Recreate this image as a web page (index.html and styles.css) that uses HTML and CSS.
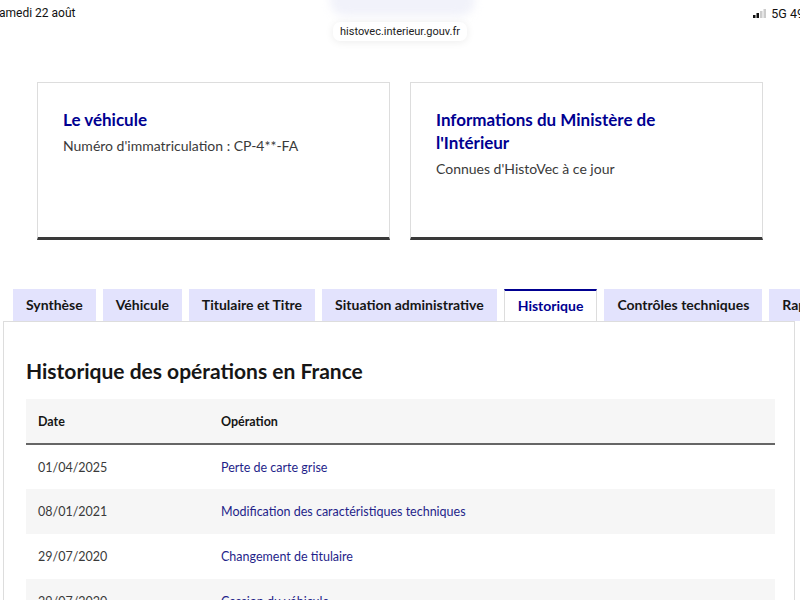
FILE: index.html
```html
<!DOCTYPE html>
<html lang="fr">
<head>
<meta charset="utf-8">
<title>HistoVec</title>
<link rel="stylesheet" href="styles.css">
</head>
<body>
<div class="blur-pill"></div>
<header class="statusbar">
  <span class="date">amedi 22 août</span>
  <span class="net">
    <svg class="signal" width="14" height="9" viewBox="0 0 14 9"><rect x="0" y="6" width="2.5" height="3" fill="#111"/><rect x="3.5" y="4" width="2.5" height="5" fill="#111"/><rect x="7" y="2" width="2.5" height="7" fill="#ccc"/><rect x="10.5" y="0" width="2.5" height="9" fill="#ccc"/></svg>
    <span>5G 49</span>
  </span>
</header>
<div class="urlrow"><span class="url">histovec.interieur.gouv.fr</span></div>

<section class="cards">
  <div class="card">
    <h2 class="card-title">Le véhicule</h2>
    <p class="card-desc">Numéro d'immatriculation : CP-4**-FA</p>
  </div>
  <div class="card">
    <h2 class="card-title">Informations du Ministère de l'Intérieur</h2>
    <p class="card-desc">Connues d'HistoVec à ce jour</p>
  </div>
</section>

<nav class="tabs">
  <span class="tab">Synthèse</span>
  <span class="tab">Véhicule</span>
  <span class="tab">Titulaire et Titre</span>
  <span class="tab">Situation administrative</span>
  <span class="tab active">Historique</span>
  <span class="tab">Contrôles techniques</span>
  <span class="tab">Rapport</span>
</nav>

<section class="panel">
  <h1 class="panel-title">Historique des opérations en France</h1>
  <table class="ops">
    <thead>
      <tr><th class="c1">Date</th><th>Opération</th></tr>
    </thead>
    <tbody>
      <tr><td class="c1">01/04/2025</td><td class="op">Perte de carte grise</td></tr>
      <tr><td class="c1">08/01/2021</td><td class="op">Modification des caractéristiques techniques</td></tr>
      <tr><td class="c1">29/07/2020</td><td class="op">Changement de titulaire</td></tr>
      <tr><td class="c1">29/07/2020</td><td class="op">Cession du véhicule</td></tr>
    </tbody>
  </table>
</section>
</body>
</html>
```
FILE: styles.css
```css
html, body {
  margin: 0;
  padding: 0;
  background: #fff;
  width: 800px;
  height: 600px;
  overflow: hidden;
  font-family: Lato, "Noto Sans", sans-serif;
  color: #161616;
}

.blur-pill {
  position: absolute;
  left: 330px;
  top: -14px;
  width: 145px;
  height: 30px;
  border-radius: 16px;
  background: #f1f2fa;
  filter: blur(4px);
}

.statusbar {
  height: 22px;
  display: flex;
  justify-content: space-between;
  align-items: center;
  font-family: Roboto, "Liberation Sans", sans-serif;
  font-size: 12px;
  color: #111;
  position: relative;
}
.date { margin-left: -1px; margin-top: 4px; }
.net {
  display: flex;
  align-items: center;
  gap: 4px;
  margin-right: -4px;
  margin-top: 4px;
  font-size: 12.5px;
}

.urlrow {
  display: flex;
  justify-content: center;
  height: 20px;
}
.url {
  font-family: Roboto, "Liberation Sans", sans-serif;
  font-size: 11px;
  color: #222;
  background: #fff;
  border-radius: 7px;
  padding: 2px 7px;
  line-height: 15px;
  box-shadow: 0 1px 8px rgba(0,0,0,0.08);
  height: 15px;
}

.cards {
  display: flex;
  gap: 20px;
  margin: 40px 37px 0 37px;
}
.card {
  flex: 1;
  border: 1px solid #dddddd;
  border-bottom: 3px solid #3a3a3a;
  padding: 25px 25px 0 25px;
  box-sizing: border-box;
  height: 158px;
}
.card-title {
  margin: 0;
  font-size: 17px;
  line-height: 23px;
  font-weight: 700;
  color: #000091;
  padding-right: 80px;
}
.card-desc {
  margin: 3px 0 0 0;
  font-size: 14px;
  line-height: 24px;
  color: #3a3a3a;
}

.tabs {
  display: flex;
  gap: 7px;
  margin: 49px 0 0 13px;
  white-space: nowrap;
  overflow: hidden;
  height: 32px;
}
.tab {
  flex: none;
  background: #e3e3fd;
  padding: 0 13px;
  font-size: 14px;
  font-weight: 700;
  line-height: 32px;
  color: #161616;
}
.tab.active {
  background: #fff;
  color: #000091;
  border-top: 2px solid #000091;
  border-left: 1px solid #dddddd;
  border-right: 1px solid #dddddd;
  line-height: 30px;
  position: relative;
  z-index: 1;
  height: 33px;
  box-sizing: border-box;
}

.panel {
  margin: 0 5px 0 3px;
  border: 1px solid #dddddd;
  border-bottom: none;
  padding: 0 20px 0 22px;
  height: 300px;
}
.panel-title {
  margin: 35px 0 0 0;
  font-size: 21px;
  line-height: 28px;
  font-weight: 700;
  color: #161616;
}

.ops {
  width: 749px;
  margin-top: 14px;
  border-collapse: collapse;
  font-size: 12.5px;
}
.ops th, .ops td {
  text-align: left;
  height: 45px;
  padding: 0 12px;
  box-sizing: border-box;
}
.ops th {
  background: #f6f6f6;
  font-weight: 700;
  color: #161616;
  border-bottom: 2px solid #666;
}
.ops .c1 { width: 183px; }
.ops td { color: #3a3a3a; }
.ops td.op { color: #1f1f8a; }
.ops tbody tr:nth-child(even) td { background: #f6f6f6; }
```
